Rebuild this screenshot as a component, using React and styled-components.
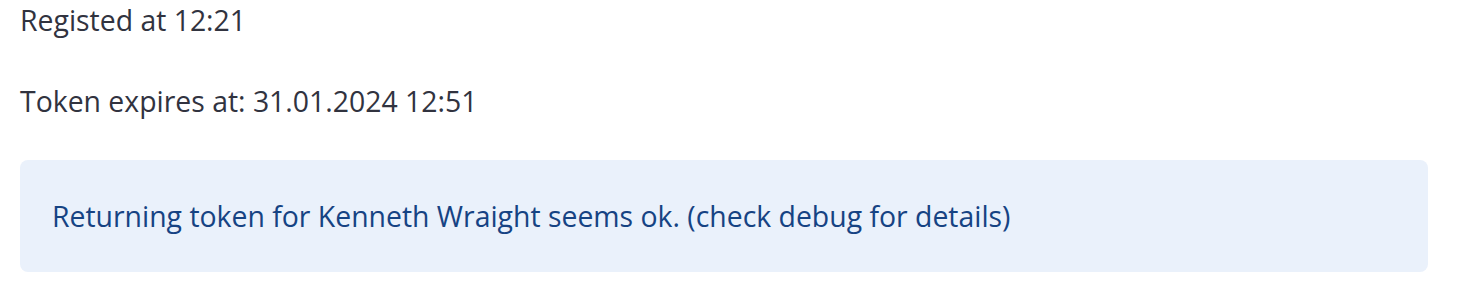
import React from "react";
import styled, { createGlobalStyle } from "styled-components";

const Global = createGlobalStyle`
  html, body { margin: 0; padding: 0; background: #ffffff; }
  body { font-family: "Open Sans", "Noto Sans", sans-serif; }
`;

const Page = styled.main`
  display: flex;
  flex-direction: column;
  padding: 0 38px 0 20px;
  width: 1466px;
  box-sizing: border-box;
`;

const Line = styled.p`
  margin: 0;
  font-size: 28.4px;
  line-height: 40px;
  color: rgb(49, 51, 63);
  margin-bottom: ${(p) => p.$gap}px;
`;

const Alert = styled.div`
  box-sizing: border-box;
  height: 112px;
  display: flex;
  align-items: center;
  padding: 0 32px;
  border-radius: 8px;
  background: rgb(234, 241, 251);
  color: rgb(22, 67, 131);
  font-size: 28.4px;
  line-height: 40px;
`;

export default function App() {
  return (
    <>
      <Global />
      <Page>
        <Line $gap={41}>Registed at 12:21</Line>
        <Line $gap={39}>Token expires at: 31.01.2024 12:51</Line>
        <Alert>Returning token for Kenneth Wraight seems ok. (check debug for details)</Alert>
      </Page>
    </>
  );
}
